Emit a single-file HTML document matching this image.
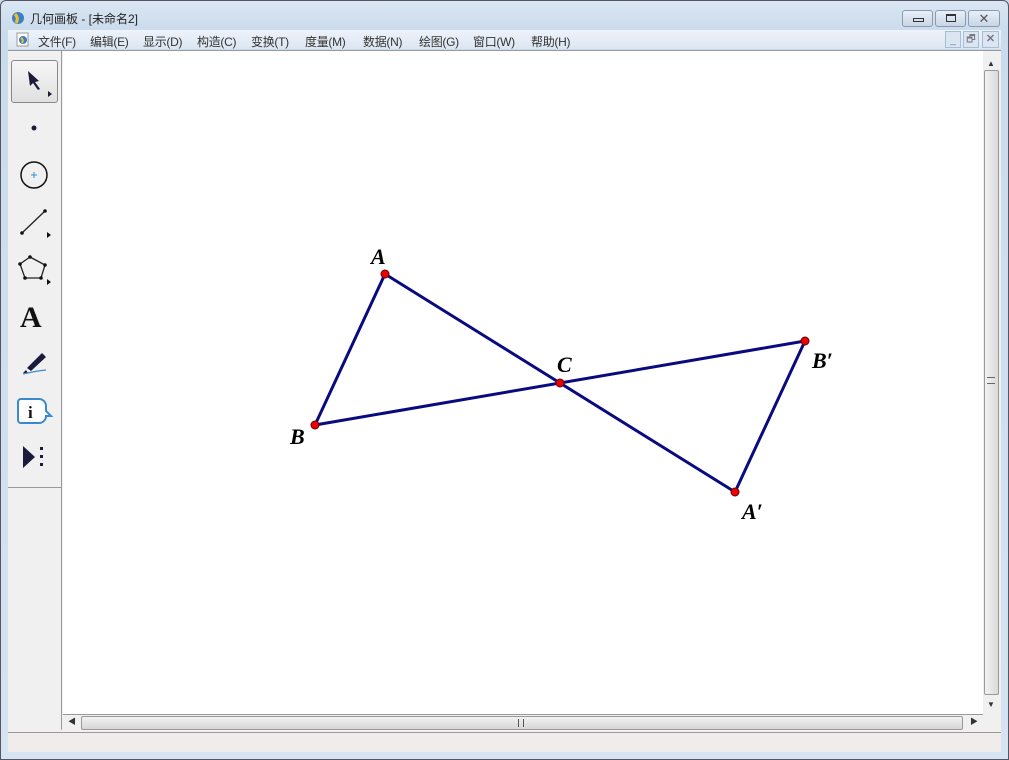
<!DOCTYPE html>
<html><head><meta charset="utf-8"><style>
*{margin:0;padding:0;box-sizing:border-box}
body{width:1009px;height:760px;overflow:hidden;background:#c9daea;font-family:"Liberation Sans","Noto Sans CJK SC",sans-serif;position:relative}
.abs{position:absolute}
.t{font-size:12px;color:#222}
.menu span{position:absolute;top:33px;font-size:12px;color:#333;letter-spacing:-0.3px}
</style></head><body>
<div class="abs" style="left:0;top:0;width:1009px;height:760px;border:1px solid #556;border-radius:6px 6px 0 0;background:linear-gradient(#dbe6f3,#cadbec 30px,#d6e3f1)"></div>
<svg class="abs" style="left:10px;top:10px" width="16" height="16"><circle cx="8" cy="8" r="6" fill="#3a7fc8"/><path d="M5 4 Q9 8 6 13" stroke="#f4c020" stroke-width="3" fill="none"/></svg>
<div class="abs t" style="left:30px;top:10px">几何画板 - [未命名2]</div>
<div class="abs" style="left:902px;top:10px;width:31px;height:17px;border:1px solid #8a9ab0;border-radius:3px;background:linear-gradient(#e8eff8,#c8d6e6)"><div class="abs" style="left:10px;top:7px;width:11px;height:4px;border:1px solid #333"></div></div>
<div class="abs" style="left:935px;top:10px;width:31px;height:17px;border:1px solid #8a9ab0;border-radius:3px;background:linear-gradient(#e8eff8,#c8d6e6)"><div class="abs" style="left:10px;top:3px;width:10px;height:8px;border:1px solid #333;border-top-width:2px"></div></div>
<div class="abs" style="left:968px;top:10px;width:32px;height:17px;border:1px solid #8a9ab0;border-radius:3px;background:linear-gradient(#e8eff8,#c8d6e6);font-size:13px;text-align:center;line-height:15px;color:#555">✕</div>
<div class="abs" style="left:8px;top:30px;width:993px;height:19px;background:linear-gradient(#eef3fa,#dce6f2)"></div>
<svg class="abs" style="left:16px;top:32px" width="14" height="15"><rect x="1" y="1" width="11" height="13" fill="#fff" stroke="#999"/><circle cx="7" cy="8" r="4" fill="#3a7fc8"/><path d="M5 6 Q8 8 6 11" stroke="#f4c020" stroke-width="2" fill="none"/></svg>
<div class="menu"><span style="left:38px">文件(F)</span><span style="left:90px">编辑(E)</span><span style="left:143px">显示(D)</span><span style="left:197px">构造(C)</span><span style="left:251px">变换(T)</span><span style="left:305px">度量(M)</span><span style="left:363px">数据(N)</span><span style="left:419px">绘图(G)</span><span style="left:473px">窗口(W)</span><span style="left:531px">帮助(H)</span></div>
<div class="abs" style="left:945px;top:31px;width:16px;height:17px;border:1px solid #a8bcd4;background:#dbe6f2;color:#778;font-size:10px;text-align:center;line-height:18px">_</div>
<div class="abs" style="left:963px;top:31px;width:16px;height:17px;border:1px solid #a8bcd4;background:#dbe6f2;color:#778;font-size:10px;text-align:center;line-height:15px">🗗</div>
<div class="abs" style="left:982px;top:31px;width:17px;height:17px;border:1px solid #a8bcd4;background:#dbe6f2;color:#778;font-size:11px;text-align:center;line-height:15px;font-weight:bold">✕</div>
<div class="abs" style="left:8px;top:50px;width:993px;height:682px;background:#f0f0f0;border-top:1px solid #999"></div>
<div class="abs" style="left:8px;top:51px;width:54px;height:679px;background:#f0f0f0;border-right:1px solid #999"></div>
<div class="abs" style="left:8px;top:487px;width:54px;height:1px;background:#999"></div>
<div class="abs" style="left:11px;top:60px;width:47px;height:43px;border:1px solid #888;border-radius:3px;background:linear-gradient(#f6f6f6,#e0e0e0)"></div>
<svg class="abs" style="left:8px;top:51px" width="54" height="430">
<path d="M20 20 L31 30 L27 31 L32 38 L30 39 L25 32 L22 35 Z" fill="#1a1a3a"/>
<path d="M40 40 L40 46 L44 43 Z" fill="#1a1a3a"/>
<circle cx="26" cy="77" r="2.5" fill="#1a1a3a"/>
<circle cx="26" cy="124" r="13" fill="none" stroke="#111" stroke-width="1.5"/>
<path d="M23 124 h6 M26 121 v6" stroke="#3a8ad0"/>
<path d="M14 182 L37 160" stroke="#222" stroke-width="1.3"/><circle cx="14" cy="182" r="1.8" fill="#111"/><circle cx="37" cy="160" r="1.8" fill="#111"/>
<path d="M39 181 L39 187 L43 184 Z" fill="#111"/>
<path d="M22 206 L37 214 L33 227 L17 227 L12 213 Z" fill="none" stroke="#222" stroke-width="1.3"/>
<g fill="#111"><circle cx="22" cy="206" r="1.8"/><circle cx="37" cy="214" r="1.8"/><circle cx="33" cy="227" r="1.8"/><circle cx="17" cy="227" r="1.8"/><circle cx="12" cy="213" r="1.8"/></g>
<path d="M39 228 L39 234 L43 231 Z" fill="#111"/>
<text x="12" y="276" font-family="Liberation Serif" font-weight="bold" font-size="30" fill="#111">A</text>
<path d="M19 317 L34 302 L38 306 L23 320 Z" fill="#1a1a3a"/><path d="M18 319 L20 322 L15 322 Z" fill="#1a1a3a"/>
<path d="M15 323 Q28 320 38 319" stroke="#3a8ad0" stroke-width="1.3" fill="none"/>
<path d="M13 348 h18 a7 7 0 0 1 7 7 v5 l5 5 h-5 a7 7 0 0 1 -7 7 h-18 a3 3 0 0 1 -3 -3 v-18 a3 3 0 0 1 3 -3z" fill="#fff" stroke="#3a8ad0" stroke-width="2"/>
<text x="20" y="367" font-family="Liberation Serif" font-weight="bold" font-size="17" fill="#111">i</text>
<path d="M15 395 L15 417 L27 406 Z" fill="#1a1a3a"/><rect x="32" y="396" width="3" height="3" fill="#1a1a3a"/><rect x="32" y="404" width="3" height="3" fill="#1a1a3a"/><rect x="32" y="412" width="3" height="3" fill="#1a1a3a"/>
</svg>
<div class="abs" style="left:63px;top:51px;width:920px;height:663px;background:#fff"></div>
<svg class="abs" style="left:0;top:0" width="1009" height="760">
<g stroke="#0a0a80" stroke-width="3" fill="none"><path d="M385 274 L315 425 L805 341 L735 492 Z"/></g>
<g fill="#e00" stroke="#600" stroke-width="1"><circle cx="385" cy="274" r="4"/><circle cx="315" cy="425" r="4"/><circle cx="560" cy="383" r="4"/><circle cx="805" cy="341" r="4"/><circle cx="735" cy="492" r="4"/></g>
<g font-family="Liberation Serif" font-style="italic" font-weight="bold" font-size="22" fill="#000">
<text x="371" y="264">A</text><text x="290" y="444">B</text><text x="557" y="372">C</text><text x="812" y="368">B′</text><text x="742" y="519">A′</text></g>
</svg>
<div class="abs" style="left:983px;top:51px;width:17px;height:663px;background:#f0f0f0"></div>
<div class="abs" style="left:987px;top:59px;font-size:8px;color:#333">▲</div>
<div class="abs" style="left:984px;top:70px;width:15px;height:625px;border:1px solid #999;border-radius:2px;background:linear-gradient(90deg,#f2f2f2,#dadada)"></div>
<div class="abs" style="left:987px;top:377px;width:8px;height:7px;border-top:1px solid #666;border-bottom:1px solid #666"></div>
<div class="abs" style="left:987px;top:700px;font-size:8px;color:#333">▼</div>
<div class="abs" style="left:63px;top:714px;width:920px;height:16px;background:#f0f0f0;border-top:1px solid #999"></div>
<div class="abs" style="left:68px;top:716px;font-size:8px;color:#333">◀</div>
<div class="abs" style="left:81px;top:716px;width:882px;height:14px;border:1px solid #999;border-radius:2px;background:linear-gradient(#f2f2f2,#d6d6d6)"></div>
<div class="abs" style="left:518px;top:719px;width:6px;height:8px;border-left:1px solid #555;border-right:1px solid #555"></div>
<div class="abs" style="left:970px;top:716px;font-size:8px;color:#333">▶</div>
<div class="abs" style="left:8px;top:732px;width:993px;height:20px;background:#efeceb;border-top:1px solid #999"></div>
</body></html>
